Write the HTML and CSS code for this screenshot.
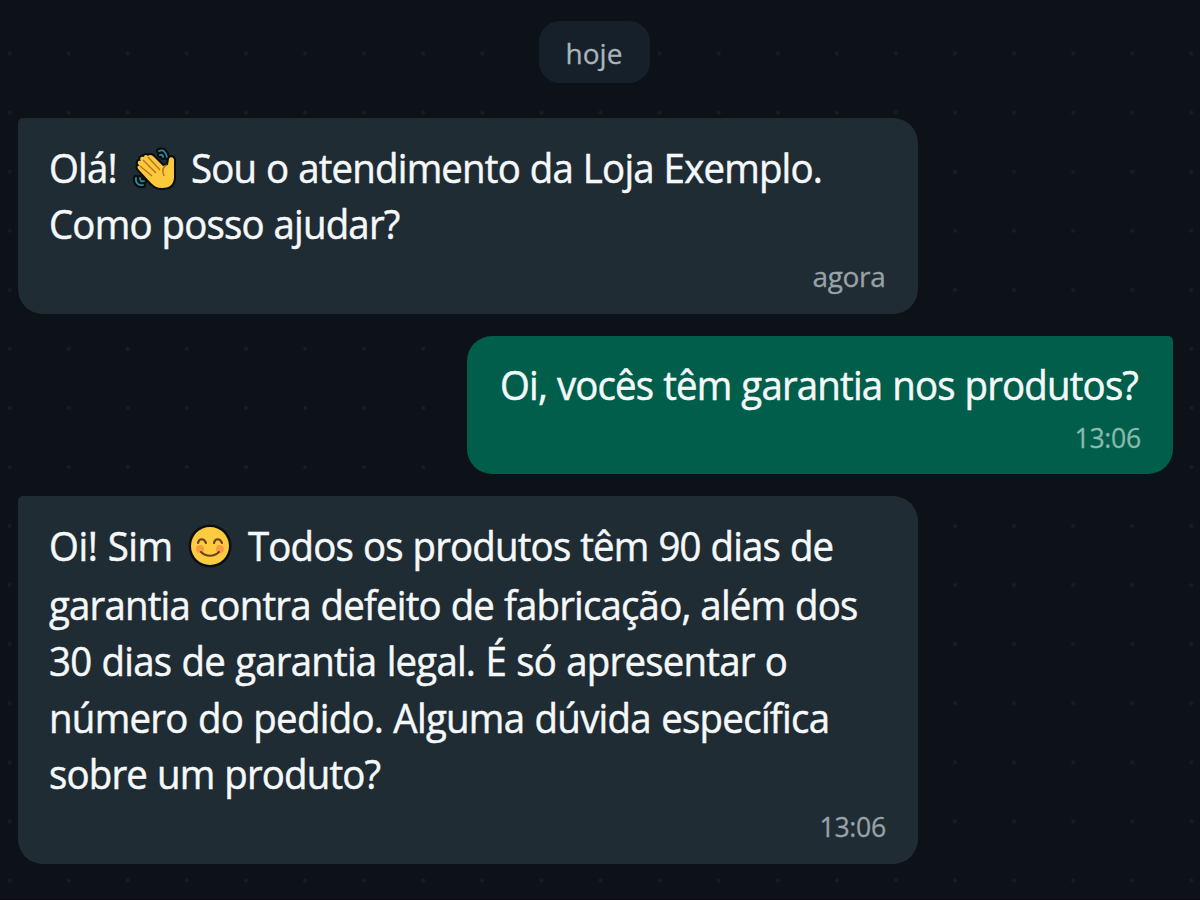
FILE: index.html
```html
<!DOCTYPE html>
<html lang="pt-BR">
<head>
<meta charset="utf-8">
<title>Loja Exemplo</title>
<link rel="stylesheet" href="styles.css">
</head>
<body>
<main class="chat">
  <div class="day">hoje</div>
  <section class="bubble received first">
    <p class="line"><span class="text">Olá!</span><svg class="emoji wave" viewBox="0 0 42 42"><g fill="none" stroke-linecap="round" stroke-linejoin="round"><path d="M26 4c4-2 7 1 8 6M27 8c2-1 3 1 3 2M3 31c-1 5 3 8 7 7M7 31c0 3 2 4 4 3" stroke="#080d10" stroke-width="6"/><path d="M26 4c4-2 7 1 8 6M27 8c2-1 3 1 3 2M3 31c-1 5 3 8 7 7M7 31c0 3 2 4 4 3" stroke="#32869b" stroke-width="1.8"/></g><path d="M15 9c2-2 4-1 6 1l9 9 5-1 1-6c1-3 5-2 5 1l0 17c0 8-5 11-12 11-5 0-8-2-11-5L6 23c-3-3-1-5 1-4-4-3-2-6 1-5-2-3 0-5 3-4 0-2 2-3 4-1z" fill="#fcc93c" stroke="#080d10" stroke-width="4" paint-order="stroke"/><path d="M15 10l12 13M10 13l13 13M7 19l12 10M34 18c-5 2-5 6-3 11" fill="none" stroke="#b87322" stroke-width="1.4"/></svg><span class="text">Sou o atendimento da Loja Exemplo.</span></p>
    <p class="line"><span class="text">Como posso ajudar?</span></p>
    <time class="stamp">agora</time>
  </section>
  <section class="bubble sent">
    <p class="line"><span class="text">Oi, vocês têm garantia nos produtos?</span></p>
    <time class="stamp clock">13:06</time>
  </section>
  <section class="bubble received last">
    <p class="line tall"><span class="text short">Oi! Sim</span><svg class="emoji smile" viewBox="0 0 42 42"><circle cx="21" cy="21" r="21.5" fill="#0b0f10"/><circle cx="21" cy="21" r="19" fill="#fccb40"/><circle cx="11" cy="24" r="4" fill="#f69a48"/><circle cx="31" cy="24" r="4" fill="#f69a48"/><path d="M9 18c1-5 6-5 8 0M25 18c1-5 6-5 8 0M12 27c5 5 13 5 18 0" fill="none" stroke="#6d421b" stroke-width="2.100" stroke-linecap="round"/></svg><span class="text">Todos os produtos têm 90 dias de</span></p>
    <p class="line"><span class="text">garantia contra defeito de fabricação, além dos</span></p>
    <p class="line"><span class="text roomy">30 dias de garantia legal. É só apresentar o</span></p>
    <p class="line"><span class="text roomier">número do pedido. Alguma dúvida específica</span></p>
    <p class="line"><span class="text">sobre um produto?</span></p>
    <time class="stamp clock">13:06</time>
  </section>
</main>
</body>
</html>
```
FILE: styles.css
```css
* { box-sizing: border-box; }
body { margin: 0; background: #0d1218; }
.chat {
  width: 1200px;
  height: 900px;
  padding: 21px 27px 0 18px;
  display: flex;
  flex-direction: column;
  overflow: hidden;
  border-bottom: 1px solid #07050d;
  font-family: "Open Sans", "Noto Sans", sans-serif;
  color: #f5f8f9;
  background: radial-gradient(circle at center, #1a1e21 0 1.2px, transparent 2.6px) -20px 24px / 59.1px 59.07px, #0d1218;
}
.day {
  align-self: center;
  width: 111px;
  height: 62px;
  margin-right: 3px;
  border-radius: 21px;
  background: #15202a;
  color: #a9b4ba;
  font-size: 28px;
  line-height: 64px;
  text-align: center;
  -webkit-text-stroke: 0.3px;
}
.bubble {
  display: flex;
  flex-direction: column;
  padding: 22px 32px 0 31px;
}
.received {
  width: 899.5px;
  background: #202c33;
  border-radius: 5px 25px 25px 25px;
}
.first { height: 195.5px; margin-top: 35px; padding-top: 21.5px; }
.sent {
  align-self: flex-end;
  width: 706px;
  height: 138.5px;
  margin-top: 22px;
  padding-top: 21.5px;
  padding-left: 33px;
  background: #005e4b;
  border-radius: 25px 5px 25px 25px;
}
.last { height: 367.5px; margin-top: 22px; }
.line {
  display: flex;
  align-items: flex-start;
  height: 56.5px;
  margin: 0;
  font-size: 40px;
  line-height: 56px;
  white-space: nowrap;
}
.text {
  letter-spacing: -0.85px;
  word-spacing: 0.7px;
  transform: scaleX(0.96);
  transform-origin: left;
  -webkit-text-stroke: 0.5px;
}
.short { letter-spacing: -0.45px; }
.roomy { letter-spacing: -0.82px; word-spacing: 1.1px; }
.roomier { letter-spacing: -0.75px; word-spacing: 1px; }
.tall { height: 58.5px; }
.emoji { width: 42px; height: 42px; margin-top: 7px; flex: none; overflow: visible; }
.wave { margin-left: 13.5px; margin-right: 16px; }
.smile { margin-left: 11px; margin-right: 17px; }
.stamp {
  align-self: flex-end;
  font-size: 28px;
  line-height: 46px;
  color: #98a2a7;
  letter-spacing: -0.3px;
  -webkit-text-stroke: 0.3px;
}
.clock { transform: scaleX(0.95); transform-origin: right; }
.sent .stamp { color: #88b9ae; }
```
